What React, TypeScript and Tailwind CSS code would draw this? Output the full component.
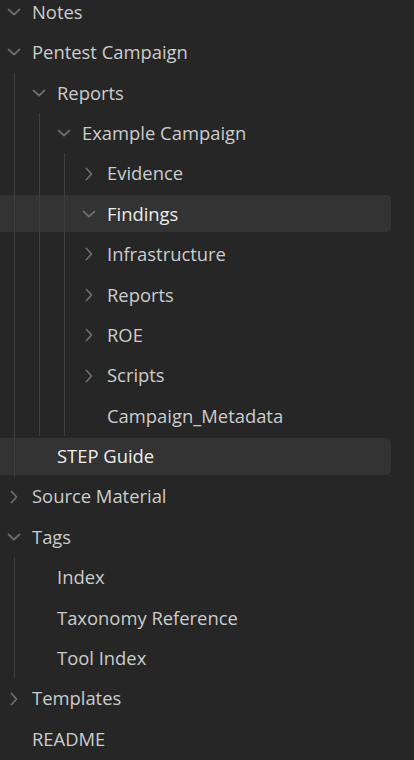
import React from "react";

type Row = {
  label: string;
  depth: number;
  chevron?: "down" | "right";
  active?: boolean;
  guides: number[];
};

// guides = x positions of the vertical indent lines that pass through the row
const rows: Row[] = [
  { label: "Notes", depth: 0, chevron: "down", guides: [] },
  { label: "Pentest Campaign", depth: 0, chevron: "down", guides: [] },
  { label: "Reports", depth: 1, chevron: "down", guides: [14] },
  { label: "Example Campaign", depth: 2, chevron: "down", guides: [14, 39] },
  { label: "Evidence", depth: 3, chevron: "right", guides: [14, 39, 64] },
  { label: "Findings", depth: 3, chevron: "down", active: true, guides: [14, 39, 64] },
  { label: "Infrastructure", depth: 3, chevron: "right", guides: [14, 39, 64] },
  { label: "Reports", depth: 3, chevron: "right", guides: [14, 39, 64] },
  { label: "ROE", depth: 3, chevron: "right", guides: [14, 39, 64] },
  { label: "Scripts", depth: 3, chevron: "right", guides: [14, 39, 64] },
  { label: "Campaign_Metadata", depth: 3, guides: [14, 39, 64] },
  { label: "STEP Guide", depth: 1, active: true, guides: [14] },
  { label: "Source Material", depth: 0, chevron: "right", guides: [] },
  { label: "Tags", depth: 0, chevron: "down", guides: [] },
  { label: "Index", depth: 1, guides: [14] },
  { label: "Taxonomy Reference", depth: 1, guides: [14] },
  { label: "Tool Index", depth: 1, guides: [14] },
  { label: "Templates", depth: 0, chevron: "right", guides: [] },
  { label: "README", depth: 0, guides: [] },
];

const Chevron = ({ dir }: { dir: "down" | "right" }) => (
  <svg width="16" height="16" viewBox="0 0 16 16" fill="none" stroke="#6c6c6c" strokeWidth="1.8" strokeLinecap="round" strokeLinejoin="round">
    {dir === "down" ? <path d="M2.5 5.5 L8 10.5 L13.5 5.5" /> : <path d="M5.5 2.5 L10.5 8 L5.5 13.5" />}
  </svg>
);

const padFor = ["pl-[6px]", "pl-[31px]", "pl-[56px]", "pl-[81px]"];

export default function App() {
  return (
    <div className="min-h-screen w-[414px] overflow-hidden bg-[#262626] font-['Open_Sans',sans-serif]">
      <div className="-mt-[8.2px] pr-[23px]">
        {rows.map((r, i) => (
          <div key={i} className="relative flex h-[40.4px] items-center">
            {r.guides.map((x) => (
              <span key={x} className="absolute top-0 bottom-0 w-px bg-[#3e3e3e]" style={{ left: x }} />
            ))}
            <div
              className={`flex h-[37px] w-full items-center gap-[10px] rounded-r-[5px] ${padFor[r.depth]} ${
                r.active ? "bg-[#333333]" : ""
              }`}
            >
              <span className="flex h-4 w-4 shrink-0 items-center justify-center">
                {r.chevron && <Chevron dir={r.chevron} />}
              </span>
              <span
                className={`relative whitespace-nowrap text-[18.4px] leading-none ${
                  r.active ? "text-[#ededed]" : "text-[#cccccc]"
                }`}
              >
                {r.label}
              </span>
            </div>
          </div>
        ))}
      </div>
    </div>
  );
}
